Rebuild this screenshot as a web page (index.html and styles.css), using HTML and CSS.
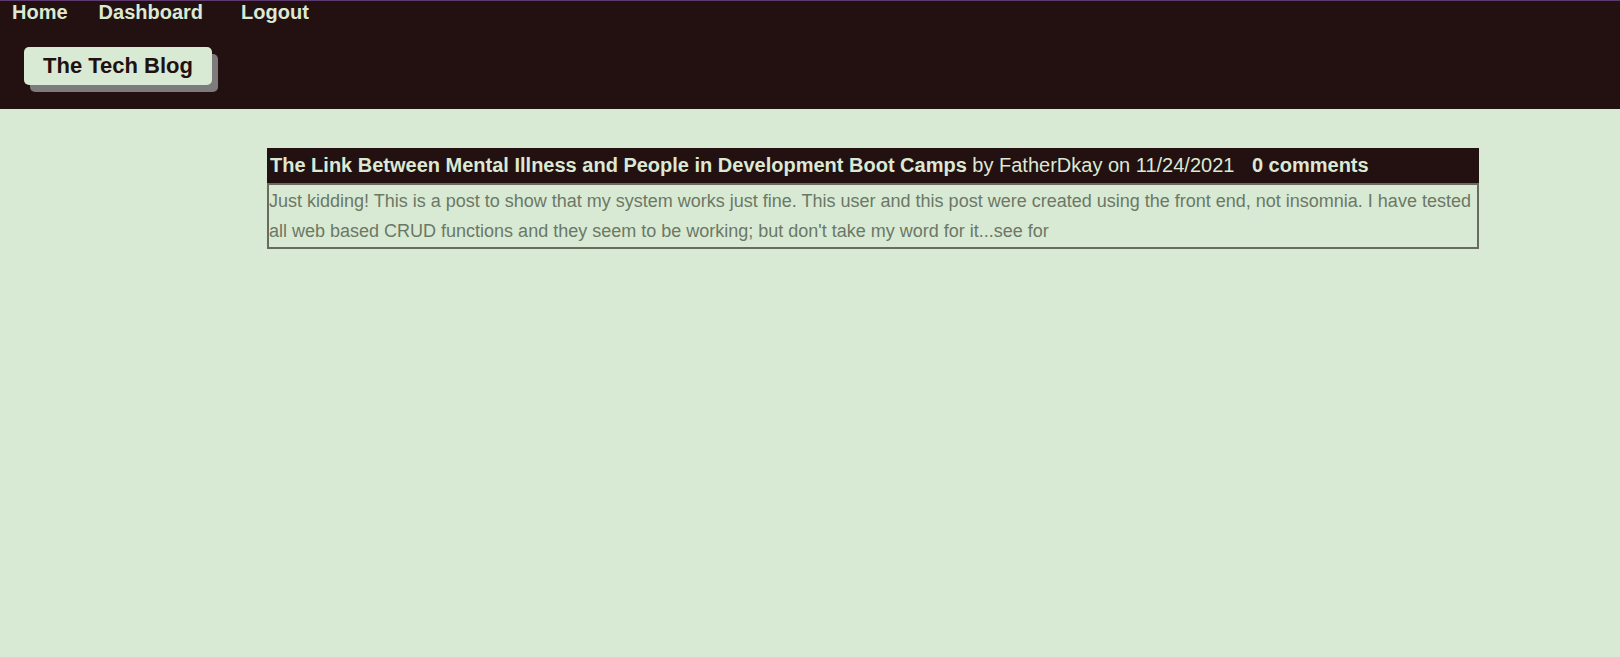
FILE: index.html
```html
<!DOCTYPE html>
<html lang="en">
<head>
<meta charset="utf-8">
<title>The Tech Blog</title>
<link rel="stylesheet" href="styles.css">
</head>
<body>
<header class="site-header">
  <nav class="nav">
    <a class="nav-link nav-home" href="#">Home</a>
    <a class="nav-link nav-dash" href="#">Dashboard</a>
    <a class="nav-link nav-logout" href="#">Logout</a>
  </nav>
  <h1 class="brand">The Tech Blog</h1>
</header>
<main class="main">
  <article class="post">
    <h2 class="post-head"><span class="post-title">The Link Between Mental Illness and People in Development Boot Camps</span> by FatherDkay on 11/24/2021 <span class="post-comments">0 comments</span></h2>
    <p class="post-body">Just kidding! This is a post to show that my system works just fine. This user and this post were created using the front end, not insomnia. I have tested all web based CRUD functions and they seem to be working; but don't take my word for it...see for</p>
  </article>
</main>
</body>
</html>
```
FILE: styles.css
```css
html, body {
  margin: 0;
  padding: 0;
}
body {
  background: #d8ead3;
  font-family: "Liberation Sans", Arial, sans-serif;
  min-height: 657px;
}
.site-header {
  background: #231011;
  border-top: 1px solid #5e3a6e;
  height: 109px;
  box-sizing: border-box;
}
.nav {
  display: flex;
  height: 23px;
  align-items: center;
  padding-left: 12px;
}
.nav-link {
  color: #dbe9d4;
  font-weight: bold;
  font-size: 20px;
  text-decoration: none;
  line-height: 23px;
}
.nav-dash { margin-left: 31px; }
.nav-logout { margin-left: 38px; }
.brand {
  display: inline-block;
  margin: 23px 0 0 24px;
  padding: 6px 19px 7px;
  background: #d8ead3;
  color: #231011;
  font-size: 22px;
  line-height: 25px;
  border-radius: 5px;
  box-shadow: 6px 7px 0 #7d7b7b;
}
.main {
  padding-top: 39px;
}
.post {
  margin-left: 267px;
  width: 1212px;
}
.post-head {
  margin: 0;
  background: #231011;
  color: #dbe9d4;
  font-size: 20px;
  font-weight: normal;
  line-height: 35px;
  height: 35px;
  padding-left: 3px;
  white-space: nowrap;
}
.post-title, .post-comments {
  font-weight: bold;
}
.post-comments {
  margin-left: 12px;
}
.post-body {
  margin: 0;
  border: 2px solid #686b5d;
  color: #6c7767;
  font-size: 18px;
  line-height: 30px;
  padding: 1px 0;
}
```
